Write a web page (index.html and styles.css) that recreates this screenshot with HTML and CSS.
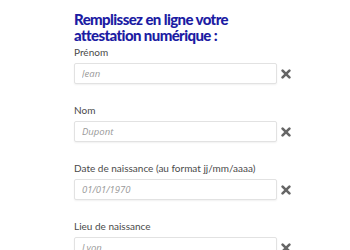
FILE: index.html
```html
<!DOCTYPE html>
<html lang="fr">
<head>
    <meta charset="UTF-8">
    <meta name="viewport" content="width=device-width, initial-scale=1.0">
    <title>Attestation numérique</title>
    <link rel="stylesheet" href="styles.css">
</head>
<body>
    <div class="container">
        <h1>Remplissez en ligne votre attestation numérique :</h1>
        <form id="attestationForm">
            <div class="field">
                <label for="firstname">Prénom</label>
                <div class="row">
                    <input type="text" id="firstname" placeholder="Jean">
                    <button type="button" class="clear" aria-label="Effacer">
                        <svg viewBox="0 0 10 10" width="10" height="10"><path d="M1.6 1.6 L8.4 8.4 M8.4 1.6 L1.6 8.4" /></svg>
                    </button>
                </div>
            </div>
            <div class="field">
                <label for="lastname">Nom</label>
                <div class="row">
                    <input type="text" id="lastname" placeholder="Dupont">
                    <button type="button" class="clear" aria-label="Effacer">
                        <svg viewBox="0 0 10 10" width="10" height="10"><path d="M1.6 1.6 L8.4 8.4 M8.4 1.6 L1.6 8.4" /></svg>
                    </button>
                </div>
            </div>
            <div class="field">
                <label for="birthday">Date de naissance (au format jj/mm/aaaa)</label>
                <div class="row">
                    <input type="text" id="birthday" placeholder="01/01/1970">
                    <button type="button" class="clear" aria-label="Effacer">
                        <svg viewBox="0 0 10 10" width="10" height="10"><path d="M1.6 1.6 L8.4 8.4 M8.4 1.6 L1.6 8.4" /></svg>
                    </button>
                </div>
            </div>
            <div class="field">
                <label for="placeofbirth">Lieu de naissance</label>
                <div class="row">
                    <input type="text" id="placeofbirth" placeholder="Lyon">
                    <button type="button" class="clear" aria-label="Effacer">
                        <svg viewBox="0 0 10 10" width="10" height="10"><path d="M1.6 1.6 L8.4 8.4 M8.4 1.6 L1.6 8.4" /></svg>
                    </button>
                </div>
            </div>
        </form>
    </div>
</body>
</html>
```

FILE: styles.css
```css
* {
    box-sizing: border-box;
    margin: 0;
    padding: 0;
}

body {
    font-family: 'Lato', sans-serif;
    background-color: #fff;
    color: #444;
}

.container {
    width: 220px;
    margin-left: 74px;
    padding-top: 11px;
}

h1 {
    font-family: 'Lato', sans-serif;
    font-weight: 900;
    font-size: 15px;
    line-height: 16px;
    letter-spacing: -0.6px;
    color: #1c1ca3;
    margin-bottom: 2px;
}

.field {
    margin-bottom: 19px;
}

label {
    display: block;
    font-size: 10px;
    line-height: 14px;
    color: #4a4a4a;
    margin-bottom: 4px;
}

.row {
    display: flex;
    align-items: center;
    gap: 4px;
}

input {
    width: 203px;
    height: 21px;
    padding: 0 7px;
    border: 1px solid #e2e2e2;
    border-radius: 2px;
    box-shadow: 0 1px 2px rgba(0, 0, 0, 0.06);
    font-family: 'Open Sans', sans-serif;
    font-size: 9.5px;
    color: #444;
}

input::placeholder {
    color: #999;
    font-style: italic;
}

.clear {
    background: none;
    border: none;
    display: flex;
    width: 10px;
    height: 10px;
    cursor: pointer;
}

.clear path {
    stroke: #666;
    stroke-width: 2.6;
    stroke-linecap: round;
}
```
